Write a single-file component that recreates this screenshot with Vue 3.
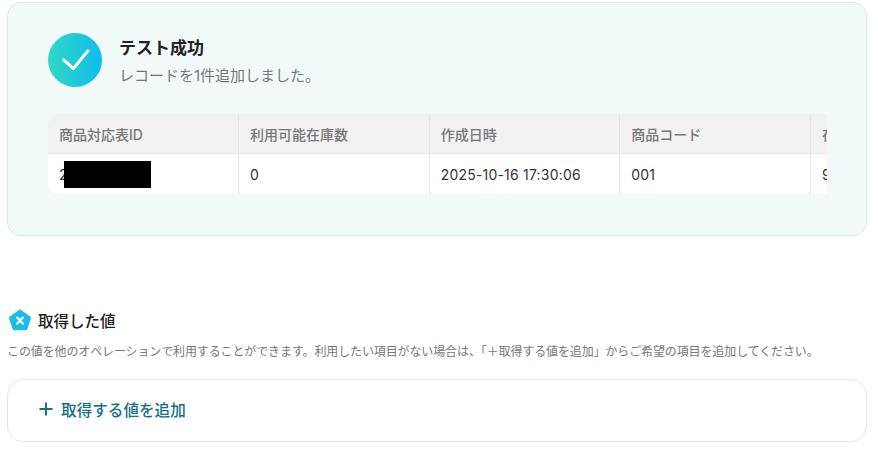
<script setup>
const columns = ['商品対応表ID', '利用可能在庫数', '作成日時', '商品コード', '在庫数']
const values = ['2', '0', '2025-10-16 17:30:06', '001', '9']
</script>

<template>
  <div class="page">
    <section class="result">
      <div class="status">
        <span class="status-icon">
          <svg viewBox="0 0 54 54" width="54" height="54">
            <path d="M15.8 26.8 L25.3 35.6 L40 17.8" fill="none" stroke="#fff" stroke-width="3" stroke-linecap="round" stroke-linejoin="round" />
          </svg>
        </span>
        <div class="status-text">
          <h2>テスト成功</h2>
          <p>レコードを1件追加しました。</p>
        </div>
      </div>

      <div class="table-wrap">
        <table>
          <thead>
            <tr><th v-for="c in columns" :key="c">{{ c }}</th></tr>
          </thead>
          <tbody>
            <tr>
              <td v-for="(v, i) in values" :key="i">
                {{ v }}
                <span v-if="i === 0" class="redact"></span>
              </td>
            </tr>
          </tbody>
        </table>
      </div>
    </section>

    <section class="values">
      <div class="values-head">
        <svg viewBox="0 0 24 24" width="24" height="24">
          <path d="M12 2.8 L21.8 9.8 L18.2 21 L5.8 21 L2.2 9.8 Z" fill="#19bdea" stroke="#19bdea" stroke-width="2.4" stroke-linejoin="round" />
          <path d="M9.2 9.6 L14.8 15.6 M14.8 9.6 L9.2 15.6" fill="none" stroke="#fff" stroke-width="2.2" stroke-linecap="round" />
        </svg>
        <h3>取得した値</h3>
      </div>
      <p class="note">この値を他のオペレーションで利用することができます。利用したい項目がない場合は、「＋取得する値を追加」からご希望の項目を追加してください。</p>
      <div class="add-box">
        <button class="add-btn">
          <svg viewBox="0 0 14 14" width="14" height="14">
            <path d="M7 0.5 V13.5 M0.5 7 H13.5" stroke="#176f87" stroke-width="2" fill="none" />
          </svg>
          取得する値を追加
        </button>
      </div>
    </section>
  </div>
</template>

<style scoped>
.page {
  width: 878px; height: 452px; overflow: hidden; box-sizing: border-box;
  padding: 2px 11px 0 7px;
  background: #fff; color: #222;
  font-family: "Inter", "Noto Sans CJK JP", sans-serif;
}

.result {
  height: 234px; box-sizing: border-box;
  padding: 30px 39px 0 40px;
  background: #f2faf9;
  border: 1px solid #e2e5e5; border-radius: 14px;
}
.status { display: flex; gap: 18px; align-items: center; height: 54px; }
.status-icon {
  width: 54px; height: 54px; border-radius: 50%; display: block;
  background: linear-gradient(90deg, #2fd8c4, #10bcec);
}
.status-icon svg { display: block; }
.status-text { margin-left: -1px; padding-top: 2px; }
.status-text h2 { margin: 0; font-size: 17px; font-weight: 600; line-height: 24px; color: #222; }
.status-text p { margin: 5px 0 0; font-size: 15px; line-height: 22px; color: #777; }

.table-wrap {
  margin-top: 27px; height: 81px; overflow: hidden;
  border-radius: 12px 0 0 12px;
}
table { border-collapse: collapse; table-layout: fixed; width: 953px; }
th, td {
  width: 190.6px; box-sizing: border-box; padding: 1px 11px 0;
  text-align: left; font-size: 14px; white-space: nowrap;
  border-right: 1px solid #e6e6e6;
}
th { height: 39px; background: #f2f2f2; color: #777; font-weight: 500; border-bottom: 1px solid #e6e6e6; }
td { height: 41px; background: #fff; color: #333; position: relative; letter-spacing: .2px; }
.redact { position: absolute; left: 16px; top: 7px; width: 87px; height: 27px; background: #000; }

.values { margin-top: 72px; }
.values-head { display: flex; align-items: center; gap: 6px; height: 24px; padding-left: 1px; }
.values-head h3 { margin: 0; font-size: 15.5px; font-weight: 500; color: #222; }
.note { margin: 11px 0 0; font-size: 12px; letter-spacing: -0.12px; line-height: 18px; color: #777; white-space: nowrap; }
.add-box {
  margin-top: 18px; height: 63px; box-sizing: border-box;
  display: flex; align-items: center; padding: 0 0 4px 31px;
  background: #fff; border: 1px solid #e6e6e6; border-radius: 16px;
}
.add-btn {
  display: flex; align-items: center; gap: 8px; padding: 0; border: none; background: none;
  font: inherit; font-size: 15.6px; font-weight: 500; color: #176f87;
}
</style>

<style>
html, body { margin: 0; background: #fff; }
</style>
